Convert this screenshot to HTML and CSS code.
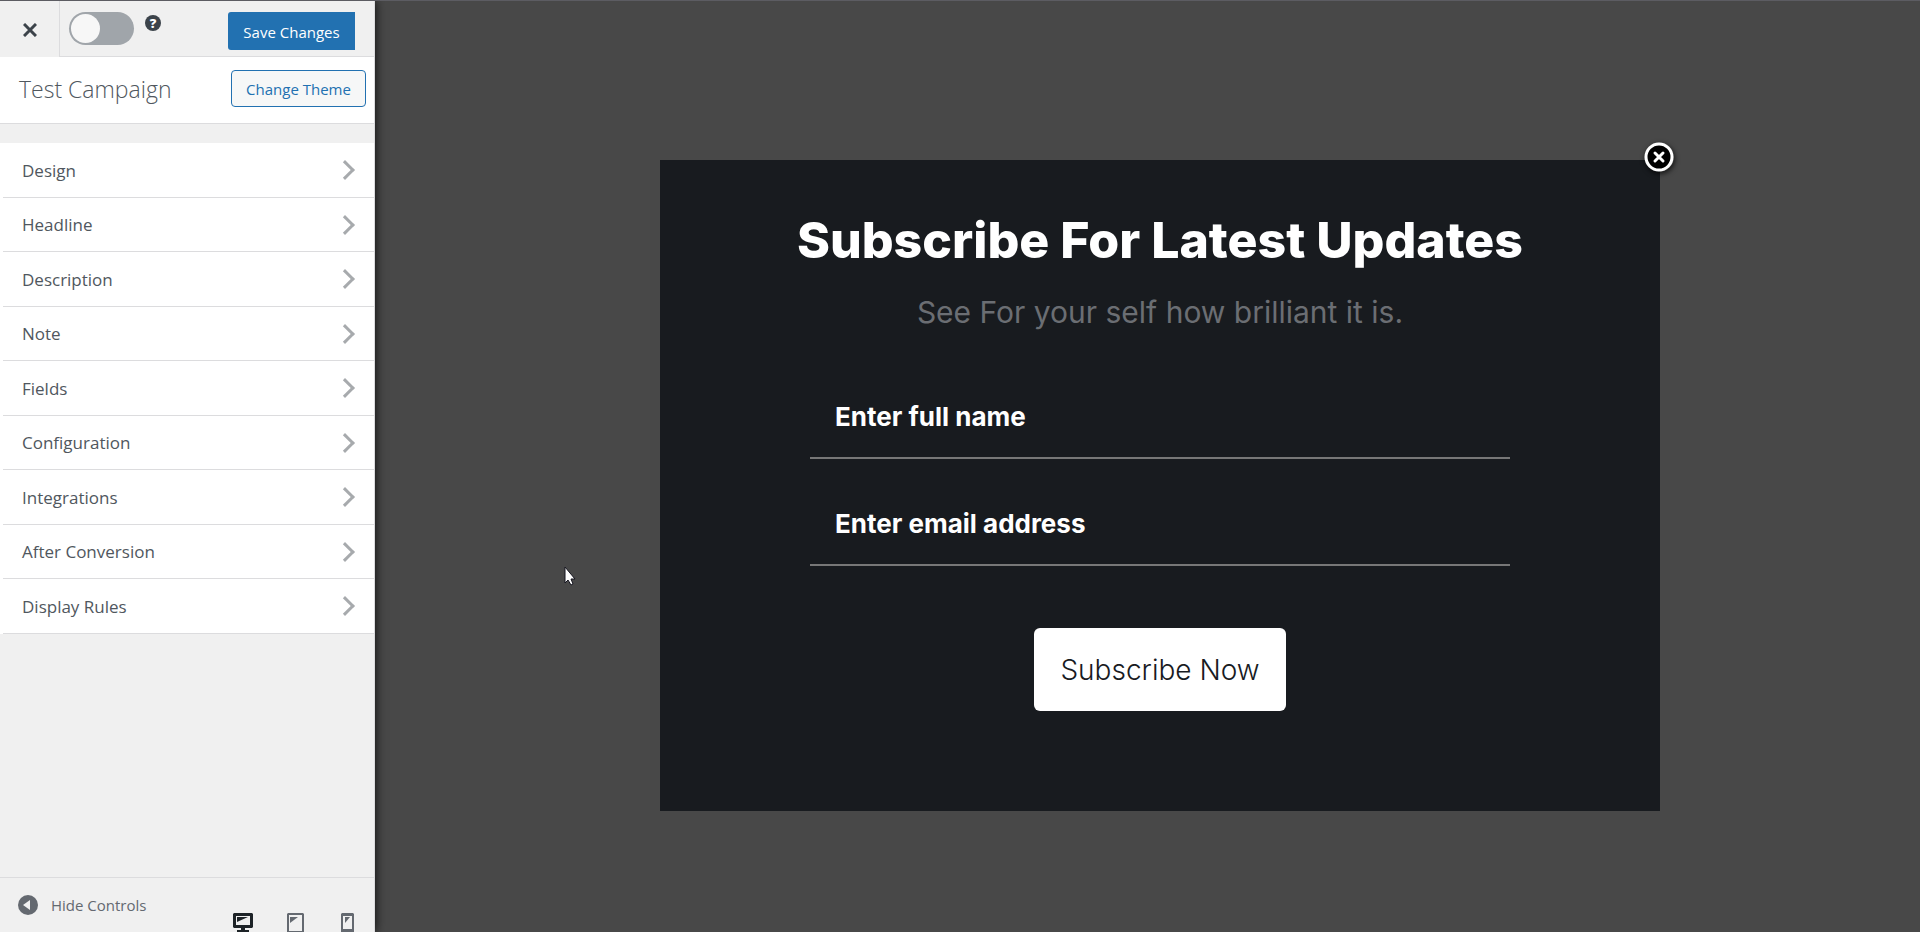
FILE: index.html
```html
<!DOCTYPE html>
<html lang="en">
<head>
    <meta charset="UTF-8">
    <meta name="viewport" content="width=device-width, initial-scale=1.0">
    <title>Customize: Test Campaign</title>
    <link rel="stylesheet" href="styles.css">
</head>
<body>
<aside class="sidebar">
    <header class="sidebar-header">
        <button type="button" class="close-editor" aria-label="Close">
            <svg width="14" height="14" viewBox="0 0 14 14"><path d="M1 1l12 12M13 1L1 13" stroke="currentColor" stroke-width="3"/></svg>
        </button>
        <div class="header-actions">
            <input type="checkbox" class="toggle" aria-label="Activate campaign">
            <a href="#" class="help" aria-label="Help">?</a>
            <button type="button" class="save-button">Save Changes</button>
        </div>
    </header>

    <div class="campaign">
        <h1>Test Campaign</h1>
        <button type="button" class="theme-button">Change Theme</button>
    </div>

    <nav>
        <ul class="sections">
            <li><a href="#">Design</a></li>
            <li><a href="#">Headline</a></li>
            <li><a href="#">Description</a></li>
            <li><a href="#">Note</a></li>
            <li><a href="#">Fields</a></li>
            <li><a href="#">Configuration</a></li>
            <li><a href="#">Integrations</a></li>
            <li><a href="#">After Conversion</a></li>
            <li><a href="#">Display Rules</a></li>
        </ul>
    </nav>

    <footer class="sidebar-footer">
        <button type="button" class="collapse">
            <svg width="20" height="20" viewBox="0 0 20 20"><circle cx="10" cy="10" r="10" fill="currentColor"/><path d="M5 10l7-5v10z" fill="#f0f0f1"/></svg>
            <span>Hide Controls</span>
        </button>
        <div class="devices">
            <button type="button" class="device active" aria-label="Desktop">
                <svg width="20" height="20" viewBox="0 0 20 20"><path d="M1 0h18l1 1v13l-1 1h-7v2h4v2H4v-2h4v-2H1l-1-1V1zM3 3v9h14V3z" fill="currentColor" fill-rule="evenodd"/><path d="M4 4h11L4 9z" fill="currentColor"/></svg>
            </button>
            <button type="button" class="device" aria-label="Tablet">
                <svg width="17" height="20" viewBox="0 0 17 20"><path d="M1 0h15l1 1v18l-1 1H1l-1-1V1zM2 2v16h13V2z" fill="currentColor" fill-rule="evenodd"/><path d="M3 4h8l-8 6z" fill="currentColor"/></svg>
            </button>
            <button type="button" class="device" aria-label="Mobile">
                <svg width="13" height="20" viewBox="0 0 13 20"><path d="M1 0h11l1 1v18l-1 1H1l-1-1V1zM2 3v13h9V3z" fill="currentColor" fill-rule="evenodd"/><path d="M4 4h5l-5 6z" fill="currentColor"/></svg>
            </button>
        </div>
    </footer>
</aside>

<main class="preview">
    <form class="optin">
        <button type="button" class="optin-close" aria-label="Close form">
            <svg width="30" height="30" viewBox="0 0 30 30"><circle cx="15" cy="15" r="13" fill="#000" stroke="#fff" stroke-width="3"/><path d="M11 11l8 8M19 11l-8 8" stroke="#fff" stroke-width="3" stroke-linecap="round"/></svg>
        </button>
        <h2>Subscribe For Latest Updates</h2>
        <p>See For your self how brilliant it is.</p>
        <input type="text" class="field" placeholder="Enter full name" aria-label="Full name">
        <input type="email" class="field" placeholder="Enter email address" aria-label="Email address">
        <button type="submit" class="submit">Subscribe Now</button>
    </form>
    <svg class="cursor" width="12" height="20" viewBox="0 0 12 20"><path d="M1 1v16l3-3 3 5 2-1-2-5h4z" fill="#fff" stroke="#15151f"/></svg>
</main>
</body>
</html>
```

FILE: styles.css
```css
* {
    box-sizing: border-box;
}

body {
    display: flex;
    min-height: 100vh;
    margin: 0;
    border-top: 1px solid #5c5c62;
    background-color: #484848;
    font-family: "Open Sans", "Noto Sans", sans-serif;
    font-size: 15px;
}

button {
    padding: 0;
    border: none;
    background: none;
    font-family: inherit;
    font-size: inherit;
    cursor: pointer;
}

svg {
    display: block;
}

/* Sidebar */
.sidebar {
    display: flex;
    flex-direction: column;
    flex: 0 0 375px;
    border-right: 1px solid #dcdcde;
    background-color: #f0f0f0;
    box-shadow: 0 0 10px rgba(0, 0, 0, 0.9);
}

.sidebar-header {
    display: flex;
    height: 56px;
}

.close-editor {
    width: 60px;
    padding: 2px 0 0 23px;
    border-right: 1px solid #dcdcde;
    color: #3c434a;
}

.header-actions {
    display: flex;
    flex: 1;
    align-items: flex-start;
    padding: 11px 19px 0 9px;
    border-bottom: 1px solid #dcdcde;
}

.toggle {
    appearance: none;
    width: 65px;
    height: 33px;
    margin: 0;
    padding: 2px;
    border-radius: 17px;
    background-color: #a0a5aa;
}

.toggle::before {
    content: "";
    display: block;
    width: 29px;
    height: 29px;
    border-radius: 50%;
    background-color: #f7f7f7;
}

.toggle:checked::before {
    margin-left: auto;
}

.help {
    width: 16px;
    height: 16px;
    margin: 3px 0 0 11px;
    border-radius: 50%;
    background-color: #3c434a;
    color: #fff;
    font-size: 13px;
    font-weight: 800;
    line-height: 16px;
    text-align: center;
    text-decoration: none;
}

.save-button {
    width: 127px;
    height: 38px;
    margin-left: auto;
    padding-top: 2px;
    border-radius: 3px 0 0 3px;
    background-color: #2271b1;
    color: #fff;
}

.campaign {
    display: flex;
    align-items: center;
    justify-content: space-between;
    height: 67px;
    padding: 0 8px 3px 19px;
    border-bottom: 1px solid #dcdcde;
    background-color: #fff;
}

.campaign h1 {
    margin: 0;
    color: #50575e;
    font-size: 23px;
    font-weight: 300;
}

.theme-button {
    width: 135px;
    height: 37px;
    border: 1px solid #2271b1;
    border-radius: 4px;
    background-color: #f6f7f7;
    color: #2271b1;
}

.sections {
    margin: 19px 0 0;
    padding: 0;
    list-style: none;
}

.sections li {
    height: 55px;
    padding-left: 3px;
    background-color: #fff;
}

.sections li:nth-child(even) {
    height: 54px;
}

.sections a {
    display: flex;
    align-items: center;
    justify-content: space-between;
    height: 100%;
    padding: 0 22px 0 19px;
    border-bottom: 1px solid #dcdcde;
    color: #50575e;
    font-size: 17px;
    font-weight: 500;
    text-decoration: none;
}

.sections a::after {
    content: "";
    width: 11px;
    height: 11px;
    border: solid #a7aaad;
    border-width: 3px 3px 0 0;
    transform: rotate(45deg);
}

.sidebar-footer {
    display: flex;
    justify-content: space-between;
    height: 55px;
    margin-top: auto;
    padding: 0 17px 0 18px;
    border-top: 1px solid #dcdcde;
    overflow: hidden;
}

.collapse {
    display: flex;
    align-items: center;
    gap: 13px;
    color: #646970;
}

.devices {
    display: flex;
    align-items: flex-start;
    gap: 32px;
    padding-top: 35px;
}

.device {
    display: flex;
    justify-content: center;
    width: 20px;
    color: #646970;
}

.device.active {
    color: #1d2327;
}

/* Form preview */
.preview {
    position: relative;
    flex: 1;
    padding: 159px 20px 120px 45px;
    font-family: Inter, "Open Sans", sans-serif;
}

.optin {
    position: relative;
    display: flex;
    flex-direction: column;
    align-items: center;
    max-width: 1000px;
    margin: 0 auto;
    padding: 50px 20px 100px;
    background-color: #181b1f;
}

.optin-close {
    position: absolute;
    top: -18px;
    right: -14px;
    border-radius: 50%;
    box-shadow: 1px 2px 5px rgba(0, 0, 0, 0.7);
}

.optin h2 {
    margin: 0;
    color: #fff;
    font-size: 50px;
    font-weight: 800;
    line-height: 60px;
}

.optin p {
    margin: 24px 0 40px;
    color: #6b6e73;
    font-size: 30px;
    font-weight: 400;
    line-height: 36px;
}

.field {
    width: 100%;
    max-width: 700px;
    height: 83px;
    margin: 6px 0 18px;
    padding: 0 25px;
    border: none;
    border-bottom: 2px solid #777;
    background: none;
    color: #fff;
    font-family: inherit;
    font-size: 26px;
    font-weight: 700;
}

.field::placeholder {
    color: #fff;
    opacity: 1;
}

.submit {
    width: 252px;
    height: 83px;
    margin-top: 44px;
    border-radius: 6px;
    background-color: #fff;
    color: #181b1f;
    font-size: 28px;
    font-weight: 300;
}

.cursor {
    position: absolute;
    top: 565px;
    left: 189px;
}
```
